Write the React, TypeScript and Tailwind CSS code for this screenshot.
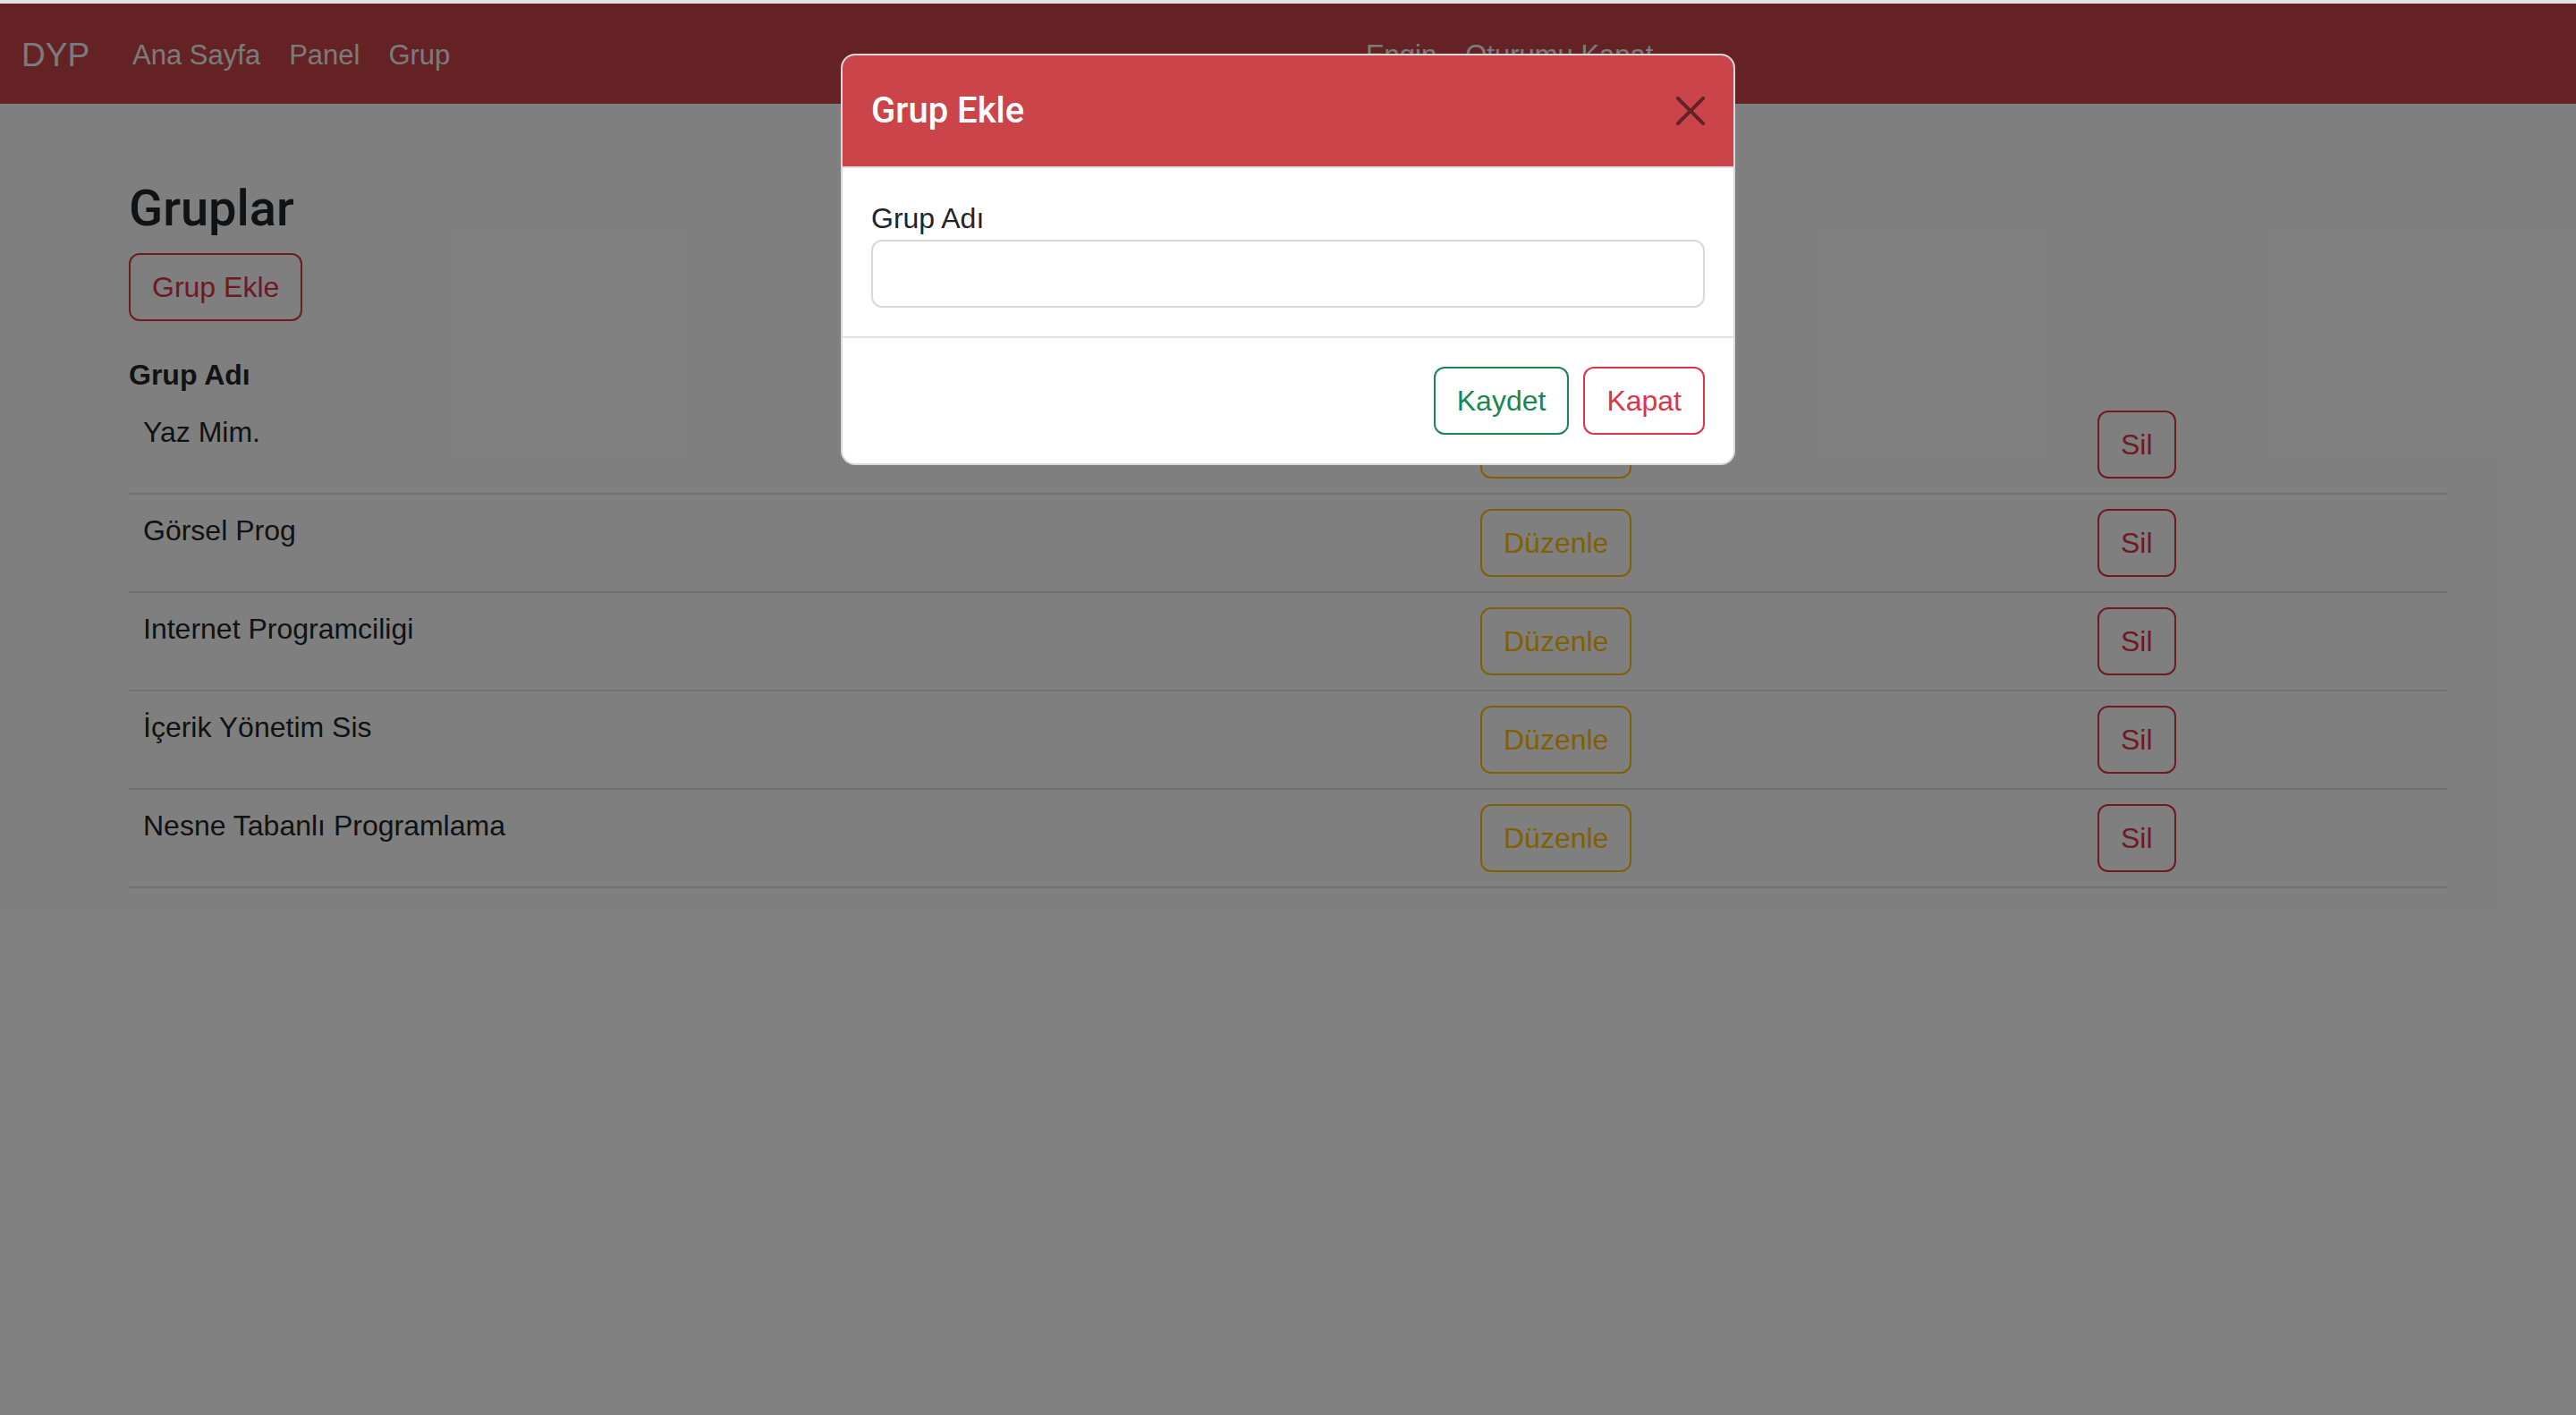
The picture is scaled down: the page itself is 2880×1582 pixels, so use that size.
const groups = ['Yaz Mim.', 'Görsel Prog', 'Internet Programciligi', 'İçerik Yönetim Sis', 'Nesne Tabanlı Programlama']

const sans = { fontFamily: '"Liberation Sans", Arial, sans-serif' }
const heading = { fontFamily: 'Roboto, "Liberation Sans", sans-serif' }

const Navbar = () => {
  return (
    <header className="flex h-[112px] items-center bg-[#cb444a] px-6 pt-1 text-[#f6f6f6]">
      <a href="#" className="mr-8 text-[37px] leading-[60px]">
        DYP
      </a>
      <nav className="flex text-[31px] leading-[48px]">
        <a href="#" className="px-4">Ana Sayfa</a>
        <a href="#" className="px-4">Panel</a>
        <a href="#" className="px-4">Grup</a>
      </nav>
      <div className="flex flex-1 justify-center text-[31px] leading-[48px]">
        <a href="#" className="px-4">Engin</a>
        <a href="#" className="px-4">Oturumu Kapat</a>
      </div>
    </header>
  )
}

const GroupModal = () => {
  return (
    <div className="absolute left-1/2 top-[56px] w-[1000px] -translate-x-1/2 overflow-hidden rounded-[16px] border-2 border-black/15 bg-white">
      <div className="flex items-center justify-between border-b-2 border-[#dee2e6] bg-[#cb444a] p-8">
        <h5 className="text-[40px] font-medium leading-[60px] text-white" style={heading}>
          Grup Ekle
        </h5>
        <button className="h-8 w-8">
          <svg viewBox="0 0 16 16" className="h-8 w-8" fill="#000" fillOpacity="0.5">
            <path d="M.293.293a1 1 0 0 1 1.414 0L8 6.586 14.293.293a1 1 0 1 1 1.414 1.414L9.414 8l6.293 6.293a1 1 0 0 1-1.414 1.414L8 9.414l-6.293 6.293a1 1 0 0 1-1.414-1.414L6.586 8 .293 1.707a1 1 0 0 1 0-1.414z" />
          </svg>
        </button>
      </div>
      <div className="p-8">
        <label className="block text-[32px] leading-[48px] text-[#212529]">Grup Adı</label>
        <input className="block h-[76px] w-full rounded-[12px] border-2 border-[#d5d9de] px-6 text-[32px] outline-none" />
      </div>
      <div className="flex justify-end gap-4 border-t-2 border-[#dee2e6] p-8">
        <button className="rounded-[12px] border-2 border-[#198754] px-6 py-3 text-[32px] leading-[48px] text-[#198754]">
          Kaydet
        </button>
        <button className="rounded-[12px] border-2 border-[#dc3545] px-6 py-3 text-[32px] leading-[48px] text-[#dc3545]">
          Kapat
        </button>
      </div>
    </div>
  )
}

export default function App() {
  return (
    <div className="min-h-screen bg-white" style={sans}>
      <div className="h-1 bg-[#e3e3e3]" />
      <div className="relative min-h-[1578px]">
        <Navbar />
        <main className="mx-auto mt-[84px] w-[2640px] px-6 text-[#212529]">
          <h3 className="mb-4 text-[56px] font-medium leading-[67px]" style={heading}>
            Gruplar
          </h3>
          <button className="rounded-[12px] border-2 border-[#dc3545] px-6 py-3 text-[32px] leading-[48px] text-[#dc3545]">
            Grup Ekle
          </button>
          <div className="mt-9 text-[32px] font-bold leading-[48px]">Grup Adı</div>
          <div className="text-[32px] leading-[48px]">
            {groups.map((g) => (
              <div key={g} className="grid grid-cols-[1495px_690px_1fr] border-b-2 border-[#dee2e6]">
                <div className="p-4">{g}</div>
                <div className="p-4">
                  <button className="rounded-[12px] border-2 border-[#ffc107] px-6 py-3 text-[#ffc107]">
                    Düzenle
                  </button>
                </div>
                <div className="p-4">
                  <button className="rounded-[12px] border-2 border-[#dc3545] px-6 py-3 text-[#dc3545]">
                    Sil
                  </button>
                </div>
              </div>
            ))}
          </div>
        </main>
        <div className="absolute inset-0 bg-black/50" />
        <GroupModal />
      </div>
    </div>
  )
}
